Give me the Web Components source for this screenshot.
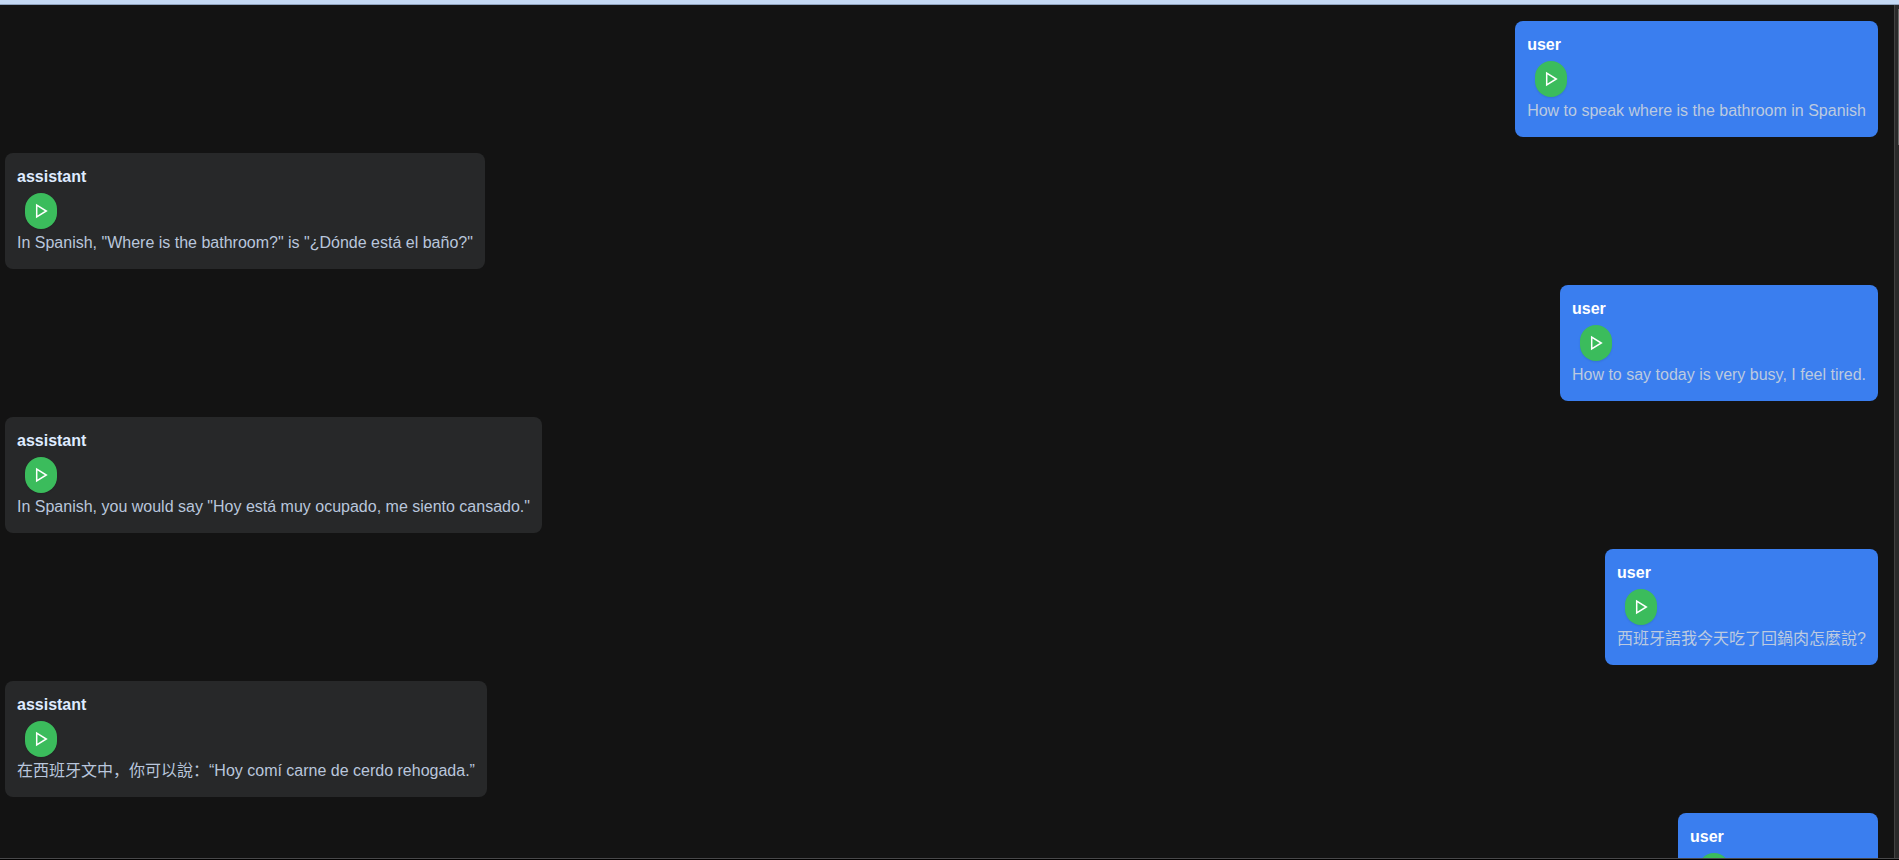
<!DOCTYPE html>
<html lang="en">
<head>
<meta charset="utf-8">
<title>Chat</title>
<style>
    body {
        margin: 0;
        background: #131313;
        font-family: "Liberation Sans", "Noto Sans CJK SC", sans-serif;
        font-size: 16px;
        line-height: 24px;
    }
</style>
</head>
<body>
<chat-window>
    <chat-message role="user">How to speak where is the bathroom in Spanish</chat-message>
    <chat-message role="assistant">In Spanish, "Where is the bathroom?" is "¿Dónde está el baño?"</chat-message>
    <chat-message role="user">How to say today is very busy, I feel tired.</chat-message>
    <chat-message role="assistant">In Spanish, you would say "Hoy está muy ocupado, me siento cansado."</chat-message>
    <chat-message role="user">西班牙語我今天吃了回鍋肉怎麼說?</chat-message>
    <chat-message role="assistant">在西班牙文中，你可以說：“Hoy comí carne de cerdo rehogada.”</chat-message>
    <chat-message role="user">西班牙語我很開心怎麼說</chat-message>
</chat-window>

<script>
class PlayButton extends HTMLElement {
    constructor() {
        super();
        this.attachShadow({ mode: 'open' });
        this.shadowRoot.innerHTML = `
            <style>
                :host {
                    display: block;
                }
                button {
                    display: flex;
                    align-items: center;
                    justify-content: center;
                    width: 32px;
                    height: 36px;
                    padding: 0;
                    border: 0;
                    border-radius: 16px;
                    background: #3bbc5c;
                    color: #fff;
                    box-shadow: 0 1px 2px rgba(0, 0, 0, 0.1);
                    cursor: pointer;
                }
                svg {
                    display: block;
                    width: 16px;
                    height: 16px;
                }
            </style>
            <button type="button" aria-label="Play">
                <svg viewBox="0 0 16 16" fill="none" stroke="currentColor" stroke-width="1.5" aria-hidden="true">
                    <path d="M3.7 2.1v11.8L13.3 8z"/>
                </svg>
            </button>
        `;
        this.shadowRoot.querySelector('button').addEventListener('click', () => {
            this.dispatchEvent(new CustomEvent('play', { bubbles: true, composed: true }));
        });
    }
}

class ChatMessage extends HTMLElement {
    constructor() {
        super();
        this.attachShadow({ mode: 'open' });
        this.shadowRoot.innerHTML = `
            <style>
                :host {
                    display: block;
                    flex: none;
                    align-self: flex-start;
                    box-sizing: border-box;
                    max-width: 80%;
                    padding: 12px 12px 14px;
                    border-radius: 8px;
                    background: #272829;
                    color: #b9c6dc;
                }
                :host([role="user"]) {
                    align-self: flex-end;
                    background: #3a7eef;
                    color: #bccae0;
                }
                strong {
                    display: block;
                    color: #dfebff;
                }
                :host([role="user"]) strong {
                    color: #fff;
                }
                play-button {
                    margin: 4px 0 2px 8px;
                }
                p {
                    margin: 0;
                }
            </style>
            <strong></strong>
            <play-button></play-button>
            <p><slot></slot></p>
        `;
        this.author = this.shadowRoot.querySelector('strong');
    }

    connectedCallback() {
        this.author.textContent = this.getAttribute('role');
    }
}

class ChatWindow extends HTMLElement {
    constructor() {
        super();
        this.attachShadow({ mode: 'open' });
        this.shadowRoot.innerHTML = `
            <style>
                :host {
                    display: flex;
                    flex-direction: column;
                    box-sizing: border-box;
                    height: 100vh;
                    overflow: hidden;
                    border-bottom: 1px solid #000;
                }
                header {
                    flex: none;
                    height: 4px;
                    background: #c5d9f4;
                    border-bottom: 1px solid #8fa3bf;
                }
                .body {
                    display: flex;
                    flex: 1;
                    min-height: 0;
                    border-bottom: 1px solid #48484a;
                }
                main {
                    display: flex;
                    flex: 1;
                    flex-direction: column;
                    gap: 16px;
                    min-width: 0;
                    padding: 16px 16px 16px 5px;
                    overflow-y: auto;
                    scrollbar-width: none;
                }
                .track {
                    display: flex;
                    justify-content: flex-end;
                    width: 4px;
                    border-left: 1px solid #424242;
                    background: #2a2a2a;
                }
                .thumb {
                    width: 1px;
                    height: 16%;
                    margin-top: 4px;
                    background: #6b6b6b;
                }
            </style>
            <header></header>
            <div class="body">
                <main><slot></slot></main>
                <div class="track"><div class="thumb"></div></div>
            </div>
        `;
    }
}

customElements.define('play-button', PlayButton);
customElements.define('chat-message', ChatMessage);
customElements.define('chat-window', ChatWindow);
</script>
</body>
</html>
